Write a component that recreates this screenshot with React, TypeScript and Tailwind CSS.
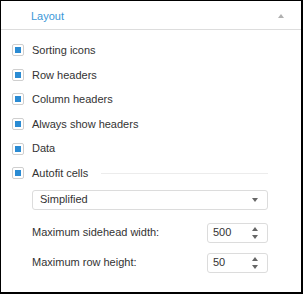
import React from 'react';

const options = [
    'Sorting icons',
    'Row headers',
    'Column headers',
    'Always show headers',
    'Data',
];

function Check() {
    return (
        <div className="w-[12px] h-[12px] border border-[#cfcfcf] rounded-[2px] p-[2px] bg-white shrink-0">
            <div className="w-full h-full bg-[#2a8bd3]" />
        </div>
    );
}

function TriUp({ color }: { color: string }) {
    return (
        <svg width="6" height="4" viewBox="0 0 6 4">
            <path d="M3 0 L6 4 L0 4 Z" fill={color} />
        </svg>
    );
}

function TriDown({ color }: { color: string }) {
    return (
        <svg width="6" height="4" viewBox="0 0 6 4">
            <path d="M0 0 L6 0 L3 4 Z" fill={color} />
        </svg>
    );
}

function NumberBox({ value }: { value: string }) {
    return (
        <div className="w-[61px] h-[20px] border border-[#dcdcdc] rounded-[3px] flex items-center justify-between pl-[5px] pr-[9px] bg-white">
            <span className="text-[11px] text-[#333]">{value}</span>
            <div className="flex flex-col items-center gap-[4px]">
                <TriUp color="#666" />
                <TriDown color="#666" />
            </div>
        </div>
    );
}

export default function App() {
    return (
        <div
            className="w-[303px] h-[294px] bg-white border-black border-t border-l border-r-2 border-b-2 text-[11px] text-[#333]"
            style={{ fontFamily: '"Liberation Sans", Arial, sans-serif' }}
        >
            <div className="h-[29px] border-b border-[#dddddd] flex items-center justify-between pl-[30px] pr-[17px] pt-[2px]">
                <span className="text-[#3a97d8] text-[11px]">Layout</span>
                <TriUp color="#b0b0b0" />
            </div>

            <div className="pl-[11px] pr-[33px] pt-[8px]">
                {options.map((label) => (
                    <div key={label} className="h-[24.6px] flex items-center gap-[8px]">
                        <Check />
                        <span>{label}</span>
                    </div>
                ))}
                <div className="h-[24.6px] flex items-center gap-[8px]">
                    <Check />
                    <span>Autofit cells</span>
                    <div className="flex-1 h-px bg-[#ececec] ml-[5px]" />
                </div>

                <div className="ml-[20px] mt-[4px] h-[20px] border border-[#dcdcdc] rounded-[3px] flex items-center justify-between pl-[7px] pr-[9px]">
                    <span>Simplified</span>
                    <TriDown color="#666" />
                </div>

                <div className="ml-[20px] mt-[13px] flex items-center justify-between">
                    <span>Maximum sidehead width:</span>
                    <NumberBox value="500" />
                </div>
                <div className="ml-[20px] mt-[10px] flex items-center justify-between">
                    <span>Maximum row height:</span>
                    <NumberBox value="50" />
                </div>
            </div>
        </div>
    );
}
